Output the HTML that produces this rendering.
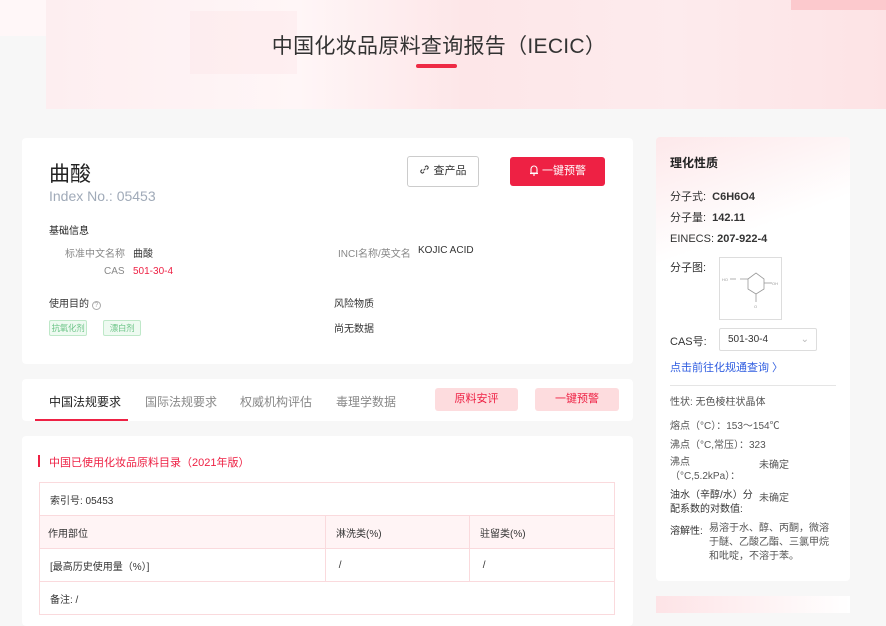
<!DOCTYPE html>
<html><head><meta charset="utf-8"><style>
*{margin:0;padding:0;box-sizing:border-box}
body{width:886px;height:613px;overflow:hidden;background:#f7f7f7;font-family:"Liberation Sans","Noto Sans CJK SC",sans-serif;color:#333;position:relative;font-size:12px}
.ab{position:absolute}
.banner{left:46px;top:0;width:840px;height:109px;background:linear-gradient(90deg,#fdeef0 0%,#fff6f7 30%,#fde6e8 50%,#fdebed 75%,#fde3e5 100%)}
.card{background:#fff;border-radius:4px;position:absolute}
.tag{position:absolute;border:1px solid #bfe8c9;background:#eefaf1;color:#6cc487;font-size:8.5px;width:38px;text-align:center;height:16px;line-height:14px;border-radius:2px;white-space:nowrap;letter-spacing:-0.3px;overflow:hidden}
.g{color:#888}
table{table-layout:fixed}
td{border:1px solid #fadadd;font-size:10px;padding:0 10px;color:#333}
</style></head><body>
<div class="ab banner"></div>
<div class="ab" style="left:0;top:0;width:46px;height:36px;background:#fff7f8"></div>
<div class="ab" style="left:190px;top:11px;width:107px;height:63px;background:rgba(253,225,228,.35)"></div>
<div class="ab" style="left:791px;top:0;width:95px;height:10px;background:#fcc9cd"></div>
<div class="ab" style="left:0;top:30px;width:886px;text-align:center;font-size:21px;color:#333;left:-4px;letter-spacing:0.3px">中国化妆品原料查询报告（IECIC）</div>
<div class="ab" style="left:416px;top:64px;width:41px;height:4px;border-radius:2px;background:#ee2b45"></div>

<div class="card" style="left:22px;top:138px;width:611px;height:226px">
<div class="ab" style="left:27px;top:20px;font-size:21px;color:#222">曲酸</div>
<div class="ab" style="left:27px;top:50px;font-size:14px;color:#a0aab8">Index No.: 05453</div>
<div class="ab" style="left:385px;top:18px;width:72px;height:31px;border:1px solid #ccc;border-radius:3px;text-align:center;line-height:29px;font-size:11px"><svg width="11" height="11" viewBox="0 0 12 12" style="vertical-align:-1px"><g fill="none" stroke="#333" stroke-width="1.1"><path d="M5 7 L7 5"/><path d="M6.5 3.5 L8 2 A2 2 0 0 1 10 4.5 L8.5 6"/><path d="M5.5 8.5 L4 10 A2 2 0 0 1 2 7.5 L3.5 6"/></g></svg> 查产品</div>
<div class="ab" style="left:488px;top:19px;width:95px;height:29px;background:#ee2144;border-radius:3px;color:#fff;text-align:center;line-height:29px;font-size:11px"><svg width="10" height="12" viewBox="0 0 10 12" style="vertical-align:-2px"><g fill="none" stroke="#fff" stroke-width="1.1"><path d="M2 9 V5 A3 3 0 0 1 8 5 V9 Z"/><path d="M1 9.5 H9"/><path d="M4 11 H6"/></g></svg> 一键预警</div>
<div class="ab" style="left:27px;top:84px;font-size:10px;color:#222">基础信息</div>
<div class="ab g" style="left:43px;top:107px;font-size:10px">标准中文名称</div>
<div class="ab" style="left:111px;top:107px;font-size:10px">曲酸</div>
<div class="ab g" style="left:82px;top:128px;font-size:10px">CAS</div>
<div class="ab" style="left:111px;top:128px;font-size:10px;color:#ee2144">501-30-4</div>
<div class="ab g" style="left:316px;top:107px;font-size:10px">INCI名称/英文名</div>
<div class="ab" style="left:396px;top:107px;font-size:10px">KOJIC ACID</div>
<div class="ab" style="left:27px;top:157px;font-size:10px">使用目的 <span style="display:inline-block;width:9px;height:9px;border:1px solid #aaa;border-radius:50%;font-size:7px;line-height:7px;text-align:center;color:#aaa">?</span></div>
<div class="tag" style="left:27px;top:182px">抗氧化剂</div>
<div class="tag" style="left:81px;top:182px">漂白剂</div>
<div class="ab" style="left:312px;top:157px;font-size:10px">风险物质</div>
<div class="ab" style="left:312px;top:182px;font-size:10px">尚无数据</div>
</div>

<div class="card" style="left:22px;top:379px;width:611px;height:42px">
<div class="ab" style="left:27px;top:14px;font-size:12px;color:#222">中国法规要求</div>
<div class="ab" style="left:13px;top:40px;width:93px;height:2px;background:#ee2144"></div>
<div class="ab g" style="left:123px;top:14px;font-size:12px">国际法规要求</div>
<div class="ab g" style="left:218px;top:14px;font-size:12px">权威机构评估</div>
<div class="ab g" style="left:314px;top:14px;font-size:12px">毒理学数据</div>
<div class="ab" style="left:413px;top:9px;width:83px;height:23px;background:#fddcde;border-radius:3px;color:#ee2144;text-align:center;line-height:23px;font-size:11px">原料安评</div>
<div class="ab" style="left:513px;top:9px;width:84px;height:23px;background:#fddcde;border-radius:3px;color:#ee2144;text-align:center;line-height:23px;font-size:11px">一键预警</div>
</div>

<div class="card" style="left:22px;top:436px;width:611px;height:190px">
<div class="ab" style="left:16px;top:19px;width:2px;height:12px;background:#ee2144"></div>
<div class="ab" style="left:27px;top:18px;font-size:11px;color:#ee2144">中国已使用化妆品原料目录（2021年版）</div>
<table class="ab" style="left:17px;top:46px;width:576px;border-collapse:collapse">
<colgroup><col style="width:286px"><col style="width:144px"><col></colgroup>
<tr style="height:33px"><td colspan="3">索引号: 05453</td></tr>
<tr style="height:33px;background:#fff4f5"><td style="padding-left:8px">作用部位</td><td>淋洗类(%)</td><td>驻留类(%)</td></tr>
<tr style="height:33px"><td>[最高历史使用量（%）]</td><td>&nbsp;/</td><td>&nbsp;/</td></tr>
<tr style="height:33px"><td colspan="3">备注: /</td></tr>
</table>
</div>

<div class="card" style="left:656px;top:137px;width:194px;height:444px;background:linear-gradient(160deg,#fde8ea 0%,#fff 25%,#fff 100%)">
<div class="ab" style="left:14px;top:17px;font-size:12px;font-weight:bold;color:#222">理化性质</div>
<div class="ab" style="left:14px;top:51px;font-size:11px">分子式: &nbsp;<b>C6H6O4</b></div>
<div class="ab" style="left:14px;top:72px;font-size:11px">分子量: &nbsp;<b>142.11</b></div>
<div class="ab" style="left:14px;top:96px;font-size:11px">EINECS: <b>207-922-4</b></div>
<div class="ab" style="left:14px;top:122px;font-size:11px">分子图:</div>
<div class="ab" style="left:63px;top:120px;width:63px;height:63px;border:1px solid #ddd;background:#fff">
<svg width="61" height="61" viewBox="0 0 61 61"><g stroke="#999" stroke-width=".8" fill="none"><path d="M28 21 L36 15 L44 21 L44 31 L36 36 L28 31 Z"/><path d="M36 36 V44"/><path d="M44 25 H52"/><path d="M28 21 H20 M10 21 H16"/></g><text x="2" y="23" font-size="4" fill="#999">HO</text><text x="52" y="27" font-size="4" fill="#999">OH</text><text x="34" y="50" font-size="4" fill="#999">O</text></svg></div>
<div class="ab" style="left:14px;top:196px;font-size:11px">CAS号:</div>
<div class="ab" style="left:63px;top:191px;width:98px;height:23px;border:1px solid #ddd;border-radius:2px;font-size:10px;line-height:21px;padding-left:8px">501-30-4<span style="position:absolute;right:7px;color:#bbb">⌄</span></div>
<div class="ab" style="left:14px;top:222px;font-size:11px;color:#2f5de0">点击前往化规通查询 〉</div>
<div class="ab" style="left:14px;top:248px;width:166px;height:1px;background:#e5e5e5"></div>
<div class="ab" style="left:14px;top:259px;font-size:10px;color:#555;line-height:13px">性状: 无色棱柱状晶体</div>
<div class="ab" style="left:14px;top:280px;font-size:10px;color:#555">熔点（°C）：153～154℃</div>
<div class="ab" style="left:14px;top:299px;font-size:10px;color:#555">沸点（°C,常压）：323</div>
<div class="ab" style="left:14px;top:319px;font-size:10px;color:#555;line-height:14px">沸点<br>（°C,5.2kPa）：</div>
<div class="ab" style="left:103px;top:319px;font-size:10px;color:#555">未确定</div>
<div class="ab" style="left:14px;top:352px;font-size:10px;color:#333;line-height:14px">油水（辛醇/水）分<br>配系数的对数值:</div>
<div class="ab" style="left:103px;top:352px;font-size:10px;color:#555">未确定</div>
<div class="ab" style="left:14px;top:385px;font-size:10px;color:#333">溶解性:</div>
<div class="ab" style="left:53px;top:385px;width:125px;font-size:10px;color:#555;line-height:14px">易溶于水、醇、丙酮，微溶于醚、乙酸乙酯、三氯甲烷和吡啶，不溶于苯。</div>
</div>
<div class="ab" style="left:656px;top:596px;width:194px;height:17px;background:linear-gradient(90deg,#fde3e6,#fff)"></div>
</body></html>
